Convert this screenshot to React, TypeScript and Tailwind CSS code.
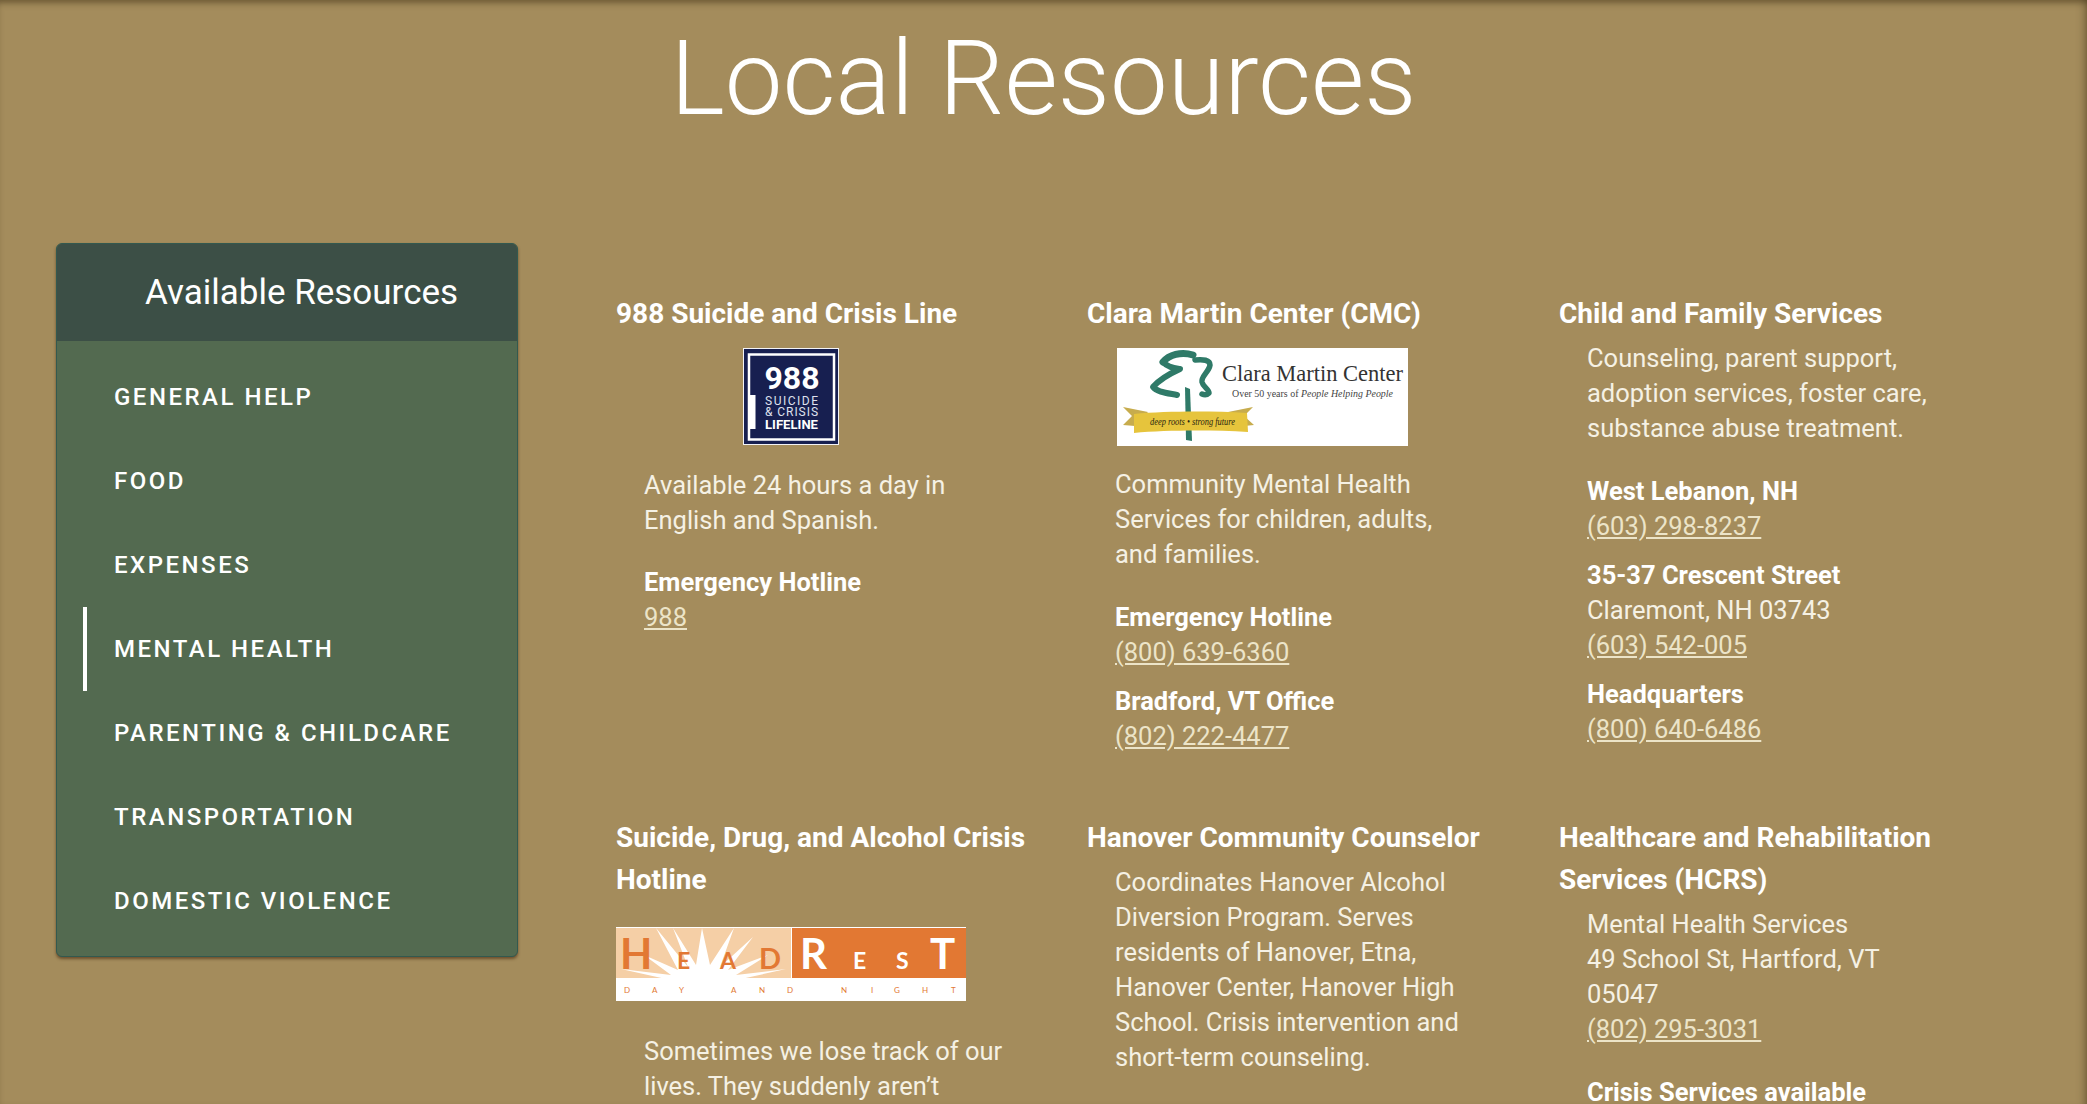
const navItems = ["GENERAL HELP", "FOOD", "EXPENSES", "MENTAL HEALTH", "PARENTING & CHILDCARE", "TRANSPORTATION", "DOMESTIC VIOLENCE"];

const Logo988 = () => (
  <svg width="96" height="97" viewBox="0 0 96 97">
    <rect width="96" height="97" fill="#f3f3f6" />
    <rect x="1" y="1" width="94" height="95" fill="#171f50" />
    <rect x="6" y="6.5" width="85" height="85" fill="none" stroke="#fff" strokeWidth="2.5" />
    <rect x="6" y="47" width="6.5" height="34" fill="#fff" />
    <text x="49" y="41" textAnchor="middle" fill="#fff" fontFamily="Roboto, sans-serif" fontWeight="700" fontSize="32">988</text>
    <text x="22" y="57" textLength="53" fill="#dfe1ee" fontFamily="Roboto, sans-serif" fontSize="12">SUICIDE</text>
    <text x="22" y="68" textLength="53" fill="#dfe1ee" fontFamily="Roboto, sans-serif" fontSize="12">&amp; CRISIS</text>
    <text x="22" y="81" textLength="53" lengthAdjust="spacingAndGlyphs" fill="#fff" fontFamily="Roboto, sans-serif" fontWeight="700" fontSize="13.5">LIFELINE</text>
  </svg>
);

const LogoClara = () => (
  <svg width="291" height="98" viewBox="0 0 291 98">
    <rect width="291" height="98" fill="#fff" />
    <g fill="none" stroke="#2f7a68" strokeLinecap="round" strokeLinejoin="round">
      <path d="M46 14 C52 7 64 3 76 7" strokeWidth="7" />
      <path d="M46 14 C50 19 57 20 63 21 C52 26 42 32 36 39 C40 44 50 45 60 47" strokeWidth="6" />
      <path d="M78 12 C86 11 93 12 93 17 C92 24 84 28 85 34 C86 39 92 41 92 45 C90 47 87 47 85 46" strokeWidth="5.5" />
    </g>
    <path d="M68 39 L73 41 L75 93 L69 92 Z" fill="#2f7a68" />
    <path d="M6 59 L31 64 L18 78 L6 77 L15 68 Z" fill="#c7ac4d" />
    <path d="M136 59 L111 64 L127 78 L137 77 L127 68 Z" fill="#c7ac4d" />
    <path d="M17 66 C50 63 95 63 130 65 L131 84 C95 82 50 82 17 85 Z" fill="#e6c43c" />
    <text x="33" y="77" textLength="85" lengthAdjust="spacingAndGlyphs" fill="#2b2411" fontFamily="Liberation Serif, serif" fontStyle="italic" fontSize="11">deep roots • strong future</text>
    <text x="105" y="33" textLength="181" lengthAdjust="spacingAndGlyphs" fill="#333" fontFamily="Liberation Serif, serif" fontSize="22.5">Clara Martin Center</text>
    <text x="115" y="49" textLength="161" lengthAdjust="spacingAndGlyphs" fill="#444" fontFamily="Liberation Serif, serif" fontSize="10.5">Over 50 years of <tspan fontStyle="italic">People Helping People</tspan></text>
  </svg>
);

const LogoHeadRest = () => (
  <svg width="350" height="74" viewBox="0 0 350 74">
    <rect width="350" height="74" fill="#fff" />
    <rect y="1" width="175" height="50" fill="#f5cfa6" />
    <rect x="176" y="1" width="174" height="50" fill="#e27833" />
    <path d="M5 42 L55 48 L28 28 L62 43 L40 1 L72 40 L57 1 L80 38 L86 1 L94 38 L118 1 L104 40 L137 10 L112 43 L152 28 L120 48 L170 42 L125 52 L50 52 Z" fill="#fff" />
    <g fontFamily="Lato, sans-serif" fontWeight="700" fill="#e27833">
      <text x="4" y="42" fontSize="42">H</text>
      <text x="61" y="42" fontSize="23">E</text>
      <text x="104" y="42" fontSize="23">A</text>
      <text x="143" y="42" fontSize="29">D</text>
    </g>
    <g fontFamily="Lato, sans-serif" fontWeight="700" fill="#fff">
      <text x="184" y="42" fontSize="42">R</text>
      <text x="237" y="42" fontSize="23">E</text>
      <text x="280" y="42" fontSize="23">S</text>
      <text x="314" y="42" fontSize="42">T</text>
    </g>
    <g fontFamily="Lato, sans-serif" fontSize="8" fill="#e27833">
      <text x="8" y="66">D</text><text x="36" y="66">A</text><text x="63" y="66">Y</text>
      <text x="115" y="66">A</text><text x="143" y="66">N</text><text x="171" y="66">D</text>
      <text x="225" y="66">N</text><text x="255" y="66">I</text><text x="278" y="66">G</text>
      <text x="306" y="66">H</text><text x="335" y="66">T</text>
    </g>
  </svg>
);

const Heading = ({ children }: { children: React.ReactNode }) => (
  <h3 className="text-[28px] leading-[42px] font-bold text-white">{children}</h3>
);

const Body = ({ children, className = "" }: { children: React.ReactNode; className?: string }) => (
  <div className={`pl-7 w-[392px] text-[25.5px] leading-[35px] text-[#f5f1e4] ${className}`}>{children}</div>
);

const Contact = ({ label, phone, lines, className = "" }: { label: string; phone: string; lines?: string[]; className?: string }) => (
  <div className={className}>
    <div className="font-bold text-white">{label}</div>
    {lines?.map((line) => <div key={line}>{line}</div>)}
    <a className="underline text-[#ece4c8]">{phone}</a>
  </div>
);

export default function App() {
  return (
    <div className="relative h-[1104px] overflow-hidden bg-[#a48c5c] text-white font-['Roboto',sans-serif] shadow-[inset_0_6px_6px_-3px_rgba(60,45,20,0.5),inset_-8px_0_8px_-6px_rgba(60,45,20,0.45)]">
      <h1 className="pt-[21px] text-center text-[103px] leading-[116px] font-light">Local Resources</h1>

      <div className="flex mt-[106px] pl-[56px]">
        {/* Sidebar */}
        <aside className="w-[462px] h-[714px] shrink-0 rounded-[6px] border border-[#33594f] bg-[#536a50] shadow-[0_2px_3px_rgba(70,40,15,0.6)]">
          <div className="h-[97px] pt-[2px] rounded-t-[5px] bg-[#3c4f46] flex items-center pl-[88px] text-[35px] font-normal">Available Resources</div>
          <nav className="pt-[14px] pl-[26px]">
            {navItems.map((item) => (
              <div
                key={item}
                className={`h-[84px] flex items-center text-[24px] font-medium tracking-[2.5px] ${item === "MENTAL HEALTH" ? "border-l-4 border-white pl-[27px]" : "pl-[31px]"}`}
              >
                {item}
              </div>
            ))}
          </nav>
        </aside>

        {/* Resources */}
        <div className="ml-[98px] mt-[50px] grid grid-cols-[420px_420px_420px] gap-x-[52px] content-start">
          <section className="h-[524px]">
            <Heading>988 Suicide and Crisis Line</Heading>
            <div className="w-[350px] flex justify-center mt-[13px]"><Logo988 /></div>
            <Body className="mt-[23px]">
              <p>Available 24 hours a day in English and Spanish.</p>
              <Contact className="mt-[27px]" label="Emergency Hotline" phone="988" />
            </Body>
          </section>
          <section className="-ml-[1px]">
            <Heading>Clara Martin Center (CMC)</Heading>
            <div className="w-[350px] flex justify-center mt-[13px]"><LogoClara /></div>
            <Body className="mt-[21px]">
              <p>Community Mental Health Services for children, adults, and families.</p>
              <Contact className="mt-[28px]" label="Emergency Hotline" phone="(800) 639-6360" />
              <Contact className="mt-[14px]" label="Bradford, VT Office" phone="(802) 222-4477" />
            </Body>
          </section>
          <section className="-ml-[1px]">
            <Heading>Child and Family Services</Heading>
            <Body className="mt-[6px]">
              <p>Counseling, parent support, adoption services, foster care, substance abuse treatment.</p>
              <Contact className="mt-[28px]" label="West Lebanon, NH" phone="(603) 298-8237" />
              <Contact className="mt-[14px]" label="35-37 Crescent Street" lines={["Claremont, NH 03743"]} phone="(603) 542-005" />
              <Contact className="mt-[14px]" label="Headquarters" phone="(800) 640-6486" />
            </Body>
          </section>

          <section>
            <Heading>Suicide, Drug, and Alcohol Crisis Hotline</Heading>
            <div className="mt-[26px]"><LogoHeadRest /></div>
            <Body className="mt-[33px]">
              <p>Sometimes we lose track of our lives. They suddenly aren’t</p>
            </Body>
          </section>
          <section className="-ml-[1px]">
            <Heading>Hanover Community Counselor</Heading>
            <Body className="mt-[6px]">
              <p>Coordinates Hanover Alcohol Diversion Program. Serves residents of Hanover, Etna, Hanover Center, Hanover High School. Crisis intervention and short-term counseling.</p>
            </Body>
          </section>
          <section className="-ml-[1px]">
            <Heading>Healthcare and Rehabilitation Services (HCRS)</Heading>
            <Body className="mt-[6px]">
              <p>Mental Health Services<br />49 School St, Hartford, VT 05047</p>
              <a className="underline text-[#ece4c8]">(802) 295-3031</a>
              <div className="mt-[28px] font-bold text-white">Crisis Services available</div>
            </Body>
          </section>
        </div>
      </div>
    </div>
  );
}
